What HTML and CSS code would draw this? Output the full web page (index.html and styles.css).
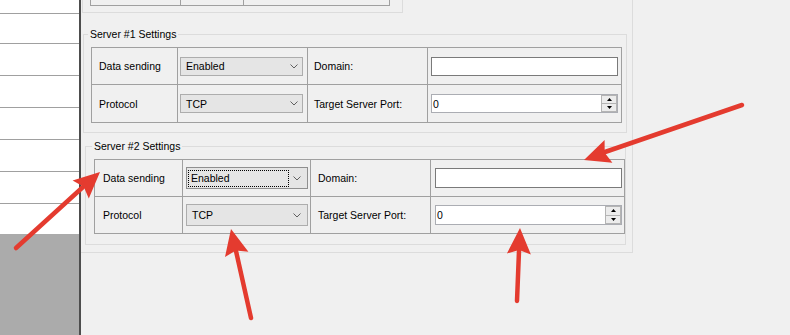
FILE: index.html
```html
<!DOCTYPE html>
<html>
<head>
    <title>Server Settings</title>
    <link rel="stylesheet" href="styles.css">
</head>
<body>
<div class="window">
    <div class="side-list">
        <div class="side-row"></div>
        <div class="side-row"></div>
        <div class="side-row"></div>
        <div class="side-row"></div>
        <div class="side-row"></div>
        <div class="side-row"></div>
        <div class="side-row"></div>
        <div class="side-blank"></div>
        <div class="side-gray"></div>
    </div>

    <div class="main">
        <div class="panel">
            <div class="top-group">
                <div class="top-table">
                    <div class="top-cell"></div>
                    <div class="top-cell"></div>
                    <div class="top-cell"></div>
                </div>
            </div>

            <fieldset class="group group-one">
                <legend>Server #1 Settings</legend>
                <div class="grid grid-one">
                    <div class="cell label">Data sending</div>
                    <div class="cell">
                        <div class="combo">
                            <span class="combo-text">Enabled</span>
                            <svg class="chevron" width="8" height="5" viewBox="0 0 8 5"><path d="M0.5 0.5 L4 4 L7.5 0.5" fill="none" stroke="#606060" stroke-width="1"/></svg>
                        </div>
                    </div>
                    <div class="cell label label-right">Domain:</div>
                    <div class="cell"><div class="textbox"></div></div>

                    <div class="cell label">Protocol</div>
                    <div class="cell">
                        <div class="combo">
                            <span class="combo-text">TCP</span>
                            <svg class="chevron" width="8" height="5" viewBox="0 0 8 5"><path d="M0.5 0.5 L4 4 L7.5 0.5" fill="none" stroke="#606060" stroke-width="1"/></svg>
                        </div>
                    </div>
                    <div class="cell label label-right">Target Server Port:</div>
                    <div class="cell">
                        <div class="textbox spinbox">
                            <span class="spin-value">0</span>
                            <div class="spin">
                                <div class="spin-btn"><svg width="5" height="3" viewBox="0 0 5 3"><path d="M2.5 0 L5 3 L0 3 Z" fill="#000"/></svg></div>
                                <div class="spin-btn"><svg width="5" height="3" viewBox="0 0 5 3"><path d="M0 0 L5 0 L2.5 3 Z" fill="#000"/></svg></div>
                            </div>
                        </div>
                    </div>
                </div>
            </fieldset>

            <fieldset class="group group-two">
                <legend>Server #2 Settings</legend>
                <div class="grid grid-two">
                    <div class="cell label">Data sending</div>
                    <div class="cell">
                        <div class="combo focused">
                            <span class="focus-rect">Enabled</span>
                            <svg class="chevron" width="8" height="5" viewBox="0 0 8 5"><path d="M0.5 0.5 L4 4 L7.5 0.5" fill="none" stroke="#606060" stroke-width="1"/></svg>
                        </div>
                    </div>
                    <div class="cell label label-right">Domain:</div>
                    <div class="cell"><div class="textbox"></div></div>

                    <div class="cell label">Protocol</div>
                    <div class="cell">
                        <div class="combo">
                            <span class="combo-text">TCP</span>
                            <svg class="chevron" width="8" height="5" viewBox="0 0 8 5"><path d="M0.5 0.5 L4 4 L7.5 0.5" fill="none" stroke="#606060" stroke-width="1"/></svg>
                        </div>
                    </div>
                    <div class="cell label label-right">Target Server Port:</div>
                    <div class="cell">
                        <div class="textbox spinbox">
                            <span class="spin-value">0</span>
                            <div class="spin">
                                <div class="spin-btn"><svg width="5" height="3" viewBox="0 0 5 3"><path d="M2.5 0 L5 3 L0 3 Z" fill="#000"/></svg></div>
                                <div class="spin-btn"><svg width="5" height="3" viewBox="0 0 5 3"><path d="M0 0 L5 0 L2.5 3 Z" fill="#000"/></svg></div>
                            </div>
                        </div>
                    </div>
                </div>
            </fieldset>
        </div>
    </div>

    <!-- annotation arrows drawn over the screenshot -->
    <svg class="arrows" width="790" height="335" viewBox="0 0 790 335">
        <g fill="#e43b2f" stroke="#e43b2f" stroke-width="4.5" stroke-linecap="round">
            <line x1="16" y1="248" x2="83" y2="187"/>
            <polygon stroke="none" points="100,172 88.8,198.4 83.7,186.8 72.6,180.6"/>

            <line x1="742" y1="105" x2="605" y2="152"/>
            <polygon stroke="none" points="584,160 604.6,140.1 604.7,152.7 612.4,162.7"/>

            <line x1="251" y1="318" x2="236" y2="251"/>
            <polygon stroke="none" points="231,229 248.4,251.8 235.8,250.5 225,257"/>

            <line x1="517" y1="301" x2="519" y2="251"/>
            <polygon stroke="none" points="520,228 530.9,254.5 519.1,250 506.9,253.5"/>
        </g>
    </svg>
</div>
</body>
</html>
```

FILE: styles.css
```css
body {
    margin: 0;
    background: #f0f0f0;
    font-family: "Liberation Sans", Arial, sans-serif;
    font-size: 10.5px;
    color: #000;
}
.window {
    position: relative;
    display: flex;
    width: 790px;
    height: 335px;
    overflow: hidden;
}

/* left list */
.side-list {
    width: 79px;
    display: flex;
    flex-direction: column;
    background: #fff;
    border-right: 2px solid #4d4d4d;
}
.side-row {
    height: 31px;
    border-bottom: 1px solid #a0a0a0;
}
.side-row:first-child {
    height: 13px;
}
.side-row:nth-child(2) {
    height: 29px;
}
.side-blank {
    height: 30px;
}
.side-gray {
    flex: 1;
    background: #ababab;
}

/* main panel */
.main {
    flex: 1;
}
.panel {
    width: 551px;
    padding-bottom: 7px;
    border-right: 1px solid #dcdcdc;
    border-bottom: 1px solid #dcdcdc;
}
.top-group {
    box-sizing: border-box;
    width: 321px;
    height: 13px;
    margin-left: 1px;
    padding-left: 7px;
    border: 1px solid #dcdcdc;
    border-top: 0;
}
.top-table {
    box-sizing: border-box;
    display: grid;
    grid-template-columns: 90px 63px 145px;
    width: 300px;
    height: 6px;
    border: 1px solid #a0a0a0;
    border-top: 0;
}
.top-cell {
    border-right: 1px solid #a0a0a0;
}
.top-cell:last-child {
    border-right: 0;
}

/* group boxes */
.group {
    box-sizing: border-box;
    min-width: 0;
    border: 1px solid #dcdcdc;
}
.group legend {
    padding: 0 2px;
    line-height: 13px;
}
.group-one {
    width: 544px;
    margin: 15px 0 0 2px;
    padding: 6px 4px 9px 4px;
}
.group-two {
    width: 541px;
    margin: 7px 0 0 4px;
    padding: 6px 0 10px 6px;
}

.grid {
    box-sizing: border-box;
    display: grid;
    width: 531px;
    border: 1px solid #a0a0a0;
}
.grid-one {
    grid-template-columns: 86px 130px 120px 193px;
    grid-template-rows: 37px 37px;
    margin-left: 3px;
}
.grid-two {
    grid-template-columns: 88px 128px 120px 193px;
    grid-template-rows: 37px 36px;
    margin-left: 2px;
}
.cell {
    box-sizing: border-box;
    display: flex;
    align-items: center;
    border-right: 1px solid #a0a0a0;
    border-bottom: 1px solid #a0a0a0;
}
.cell:nth-child(4n) {
    border-right: 0;
}
.cell:nth-child(n+5) {
    border-bottom: 0;
}
.grid-one .label {
    padding-left: 7px;
}
.grid-one .label-right {
    padding-left: 6px;
}
.grid-two .label {
    padding-left: 8px;
}
.grid-two .label-right {
    padding-left: 7px;
}

/* combo boxes */
.combo {
    box-sizing: border-box;
    display: flex;
    align-items: center;
    padding-left: 5px;
    background: #e5e5e5;
    border: 1px solid #adadad;
}
.grid-one .combo {
    width: 123px;
    height: 19px;
    margin-left: 2px;
}
.grid-two .combo {
    width: 122px;
    height: 22px;
    margin-left: 3px;
}
.combo-text {
    flex: 1;
}
.chevron {
    margin-right: 4px;
}
.grid-two .chevron {
    margin-right: 6px;
}
.combo.focused {
    padding-left: 1px;
    border-color: #8f8f8f;
}
.focus-rect {
    box-sizing: border-box;
    display: flex;
    align-items: center;
    width: 101px;
    height: 17px;
    margin-right: auto;
    padding-left: 2px;
    border: 1px dotted #000;
}

/* text boxes */
.textbox {
    box-sizing: border-box;
    width: 187px;
    background: #fff;
    border: 1px solid #7a7a7a;
}
.grid-one .textbox {
    height: 19px;
    margin-left: 3px;
}
.grid-two .textbox {
    height: 20px;
    margin-left: 4px;
}
.spinbox {
    display: flex;
    align-items: center;
    padding-left: 1px;
    border-color: #abadb3;
}
.spin {
    display: flex;
    flex-direction: column;
    align-self: stretch;
    width: 16px;
    margin-left: auto;
}
.spin-btn {
    flex: 1;
    display: flex;
    align-items: center;
    justify-content: center;
    background: #ececec;
    border: 1px solid #b4b4b4;
}
.spin-btn + .spin-btn {
    border-top: 0;
}

.arrows {
    position: absolute;
    left: 0;
    top: 0;
    pointer-events: none;
}
```
